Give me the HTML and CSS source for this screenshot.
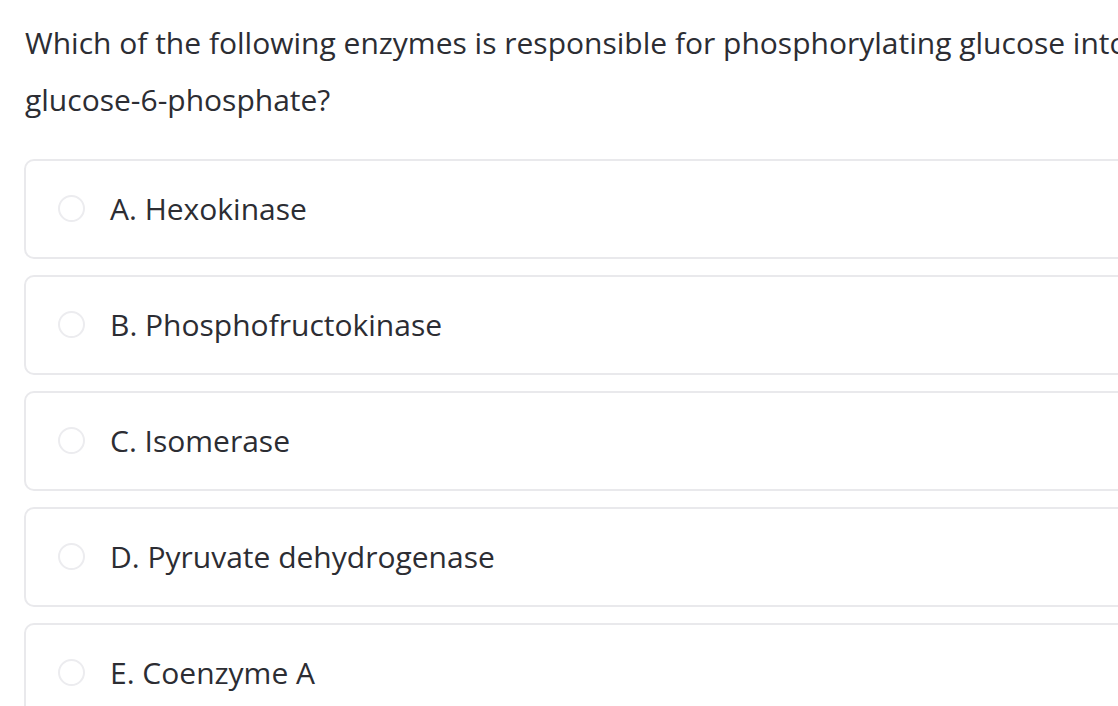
FILE: index.html
```html
<!DOCTYPE html>
<html lang="en">
<head>
<meta charset="utf-8">
<link rel="stylesheet" href="styles.css">
</head>
<body>
<main class="quiz">
  <p class="question">Which of the following enzymes is responsible for phosphorylating glucose into glucose-6-phosphate?</p>
  <ul class="options">
    <li class="option"><span class="radio"></span><span class="label">A. Hexokinase</span></li>
    <li class="option"><span class="radio"></span><span class="label">B. Phosphofructokinase</span></li>
    <li class="option"><span class="radio"></span><span class="label">C. Isomerase</span></li>
    <li class="option"><span class="radio"></span><span class="label">D. Pyruvate dehydrogenase</span></li>
    <li class="option"><span class="radio"></span><span class="label">E. Coenzyme A</span></li>
  </ul>
</main>
</body>
</html>
```
FILE: styles.css
```css
html, body {
  margin: 0;
  padding: 0;
  background: #ffffff;
  overflow: hidden;
}
body {
  font-family: "Open Sans", Lato, sans-serif;
  color: #2c2d33;
}
.quiz {
  width: 1180px;
  padding: 14px 0 0 24px;
}
.question {
  margin: 0;
  padding-left: 1px;
  font-size: 30px;
  line-height: 57px;
}
.options {
  list-style: none;
  margin: 31px 0 0;
  padding: 0;
  display: flex;
  flex-direction: column;
  gap: 16px;
}
.option {
  height: 96px;
  border: 2px solid #e9e9ec;
  border-radius: 10px;
  display: flex;
  align-items: center;
  padding-left: 32px;
}
.radio {
  width: 23px;
  height: 23px;
  border: 2px solid #ececef;
  border-radius: 50%;
  flex: none;
  margin-top: -1px;
}
.label {
  margin-left: 25px;
  font-size: 30px;
  margin-top: -2px;
}
```
